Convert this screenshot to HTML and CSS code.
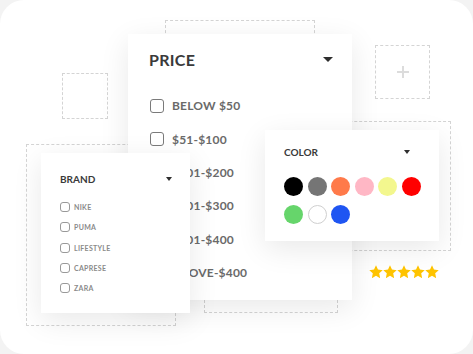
FILE: index.html
```html
<!DOCTYPE html>
<html>
  <head>
    <meta charset="utf-8">
    <title>Filters</title>
    <link rel="stylesheet" href="styles.css">
  </head>
  <body>
    <div class="frame">
      <div class="dash dash-a"></div>
      <div class="dash dash-b"></div>
      <div class="dash dash-c"><span class="plus"></span></div>
      <div class="dash dash-d"></div>
      <div class="dash dash-e"></div>
      <div class="dash dash-f"></div>

      <div class="card price">
        <div class="head">
          <span>PRICE</span>
          <span class="caret"></span>
        </div>
        <ul class="options">
          <li><span class="box"></span>BELOW $50</li>
          <li><span class="box"></span>$51-$100</li>
          <li><span class="box"></span>$101-$200</li>
          <li><span class="box"></span>$201-$300</li>
          <li><span class="box"></span>$301-$400</li>
          <li><span class="box"></span>ABOVE-$400</li>
        </ul>
      </div>

      <div class="card brand">
        <div class="head">
          <span>BRAND</span>
          <span class="caret"></span>
        </div>
        <ul class="options">
          <li><span class="box"></span>NIKE</li>
          <li><span class="box"></span>PUMA</li>
          <li><span class="box"></span>LIFESTYLE</li>
          <li><span class="box"></span>CAPRESE</li>
          <li><span class="box"></span>ZARA</li>
        </ul>
      </div>

      <div class="card color">
        <div class="head">
          <span>COLOR</span>
          <span class="caret"></span>
        </div>
        <div class="swatches">
          <span class="dot" style="background:#000000"></span>
          <span class="dot" style="background:#757575"></span>
          <span class="dot" style="background:#ff7a4a"></span>
          <span class="dot" style="background:#ffb7c5"></span>
          <span class="dot" style="background:#f3f78e"></span>
          <span class="dot" style="background:#ff0000"></span>
          <span class="dot" style="background:#66d56b"></span>
          <span class="dot white"></span>
          <span class="dot" style="background:#1f55f2"></span>
        </div>
      </div>

      <div class="stars">
        <svg viewBox="0 0 24 24"><polygon points="12,0.5 15.4,7.8 23.5,8.8 17.5,14.3 19.1,22.5 12,18.4 4.9,22.5 6.5,14.3 0.5,8.8 8.6,7.8"/></svg>
        <svg viewBox="0 0 24 24"><polygon points="12,0.5 15.4,7.8 23.5,8.8 17.5,14.3 19.1,22.5 12,18.4 4.9,22.5 6.5,14.3 0.5,8.8 8.6,7.8"/></svg>
        <svg viewBox="0 0 24 24"><polygon points="12,0.5 15.4,7.8 23.5,8.8 17.5,14.3 19.1,22.5 12,18.4 4.9,22.5 6.5,14.3 0.5,8.8 8.6,7.8"/></svg>
        <svg viewBox="0 0 24 24"><polygon points="12,0.5 15.4,7.8 23.5,8.8 17.5,14.3 19.1,22.5 12,18.4 4.9,22.5 6.5,14.3 0.5,8.8 8.6,7.8"/></svg>
        <svg viewBox="0 0 24 24"><polygon points="12,0.5 15.4,7.8 23.5,8.8 17.5,14.3 19.1,22.5 12,18.4 4.9,22.5 6.5,14.3 0.5,8.8 8.6,7.8"/></svg>
      </div>
    </div>
  </body>
</html>
```

FILE: styles.css
```css
body
{
    margin: 0;
    background-color: #f3f3f3;
    font-family: Lato, "Open Sans", sans-serif;
}
.frame
{
    position: relative;
    width: 473px;
    height: 354px;
    background: white;
    border-radius: 24px;
    overflow: hidden;
}

/* dashed placeholders behind the cards */
.dash
{
    position: absolute;
    border: 1px dashed #d4d4d4;
    box-sizing: border-box;
}
.dash-a { left: 165px; top: 20px; width: 150px; height: 200px; }
.dash-b { left: 62px; top: 73px; width: 46px; height: 46px; }
.dash-c
{
    left: 375px; top: 45px; width: 55px; height: 54px;
    display: flex;
    align-items: center;
    justify-content: center;
}
.dash-d { left: 300px; top: 121px; width: 151px; height: 130px; }
.dash-e { left: 204px; top: 200px; width: 134px; height: 113px; }
.dash-f { left: 26px; top: 144px; width: 150px; height: 182px; }
.plus
{
    position: relative;
    width: 12px;
    height: 12px;
}
.plus::before, .plus::after
{
    content: "";
    position: absolute;
    background: #dcdcdc;
}
.plus::before { left: 5px; top: 0; width: 2px; height: 12px; }
.plus::after { left: 0; top: 5px; width: 12px; height: 2px; }

/* cards */
.card
{
    position: absolute;
    background: white;
    box-sizing: border-box;
    box-shadow: 0 8px 28px rgba(0, 0, 0, 0.09);
}
.head
{
    display: flex;
    align-items: center;
    justify-content: space-between;
    font-weight: bold;
    color: #3a3a3a;
}
.caret
{
    width: 0;
    height: 0;
    border-left: 5px solid transparent;
    border-right: 5px solid transparent;
    border-top: 5px solid #2e2e2e;
}
.options
{
    list-style: none;
    margin: 0;
    padding: 0;
}
.options li
{
    display: flex;
    align-items: center;
    font-weight: bold;
    white-space: nowrap;
}
.box
{
    box-sizing: border-box;
    flex: none;
    border: 1.5px solid #7a7a7a;
    border-radius: 3px;
}

.price
{
    left: 128px; top: 34px; width: 224px; height: 266px;
    padding: 10px 19px 0 21px;
    z-index: 2;
}
.price .head { height: 30px; font-size: 16px; letter-spacing: 0.3px; }
.price .options { margin-top: 15px; }
.price .options li
{
    height: 33.4px;
    font-size: 12px;
    color: #6a6a6a;
    letter-spacing: 0.2px;
}
.price .box { width: 14px; height: 14px; margin: 0 8px 0 1px; }

.brand
{
    left: 41px; top: 153px; width: 149px; height: 160px;
    padding: 18px 18px 0 19px;
    z-index: 3;
}
.brand .head { height: 16px; font-size: 10px; }
.brand .caret { border-width: 4px 3px 0; }
.brand .options { margin-top: 10px; }
.brand .options li
{
    height: 20.3px;
    font-size: 7px;
    color: #8a8a8a;
    letter-spacing: 0.3px;
}
.brand .box { width: 10px; height: 10px; border-width: 1px; border-color: #999; margin-right: 4px; }

.color
{
    left: 265px; top: 130px; width: 174px; height: 111px;
    padding: 14px 29px 0 19px;
    z-index: 3;
}
.color .head { height: 16px; font-size: 10px; }
.color .caret { border-width: 4px 3.5px 0; }
.swatches
{
    display: grid;
    grid-template-columns: repeat(6, 19px);
    column-gap: 4.5px;
    row-gap: 8.5px;
    margin-top: 17px;
}
.dot
{
    width: 19px;
    height: 19px;
    border-radius: 50%;
    box-sizing: border-box;
}
.dot.white { background: white; border: 1px solid #cfcfcf; }

.stars
{
    position: absolute;
    left: 369px;
    top: 265px;
    display: flex;
    gap: 0;
}
.stars svg
{
    width: 14px;
    height: 14px;
    fill: #ffc400;
}
```
